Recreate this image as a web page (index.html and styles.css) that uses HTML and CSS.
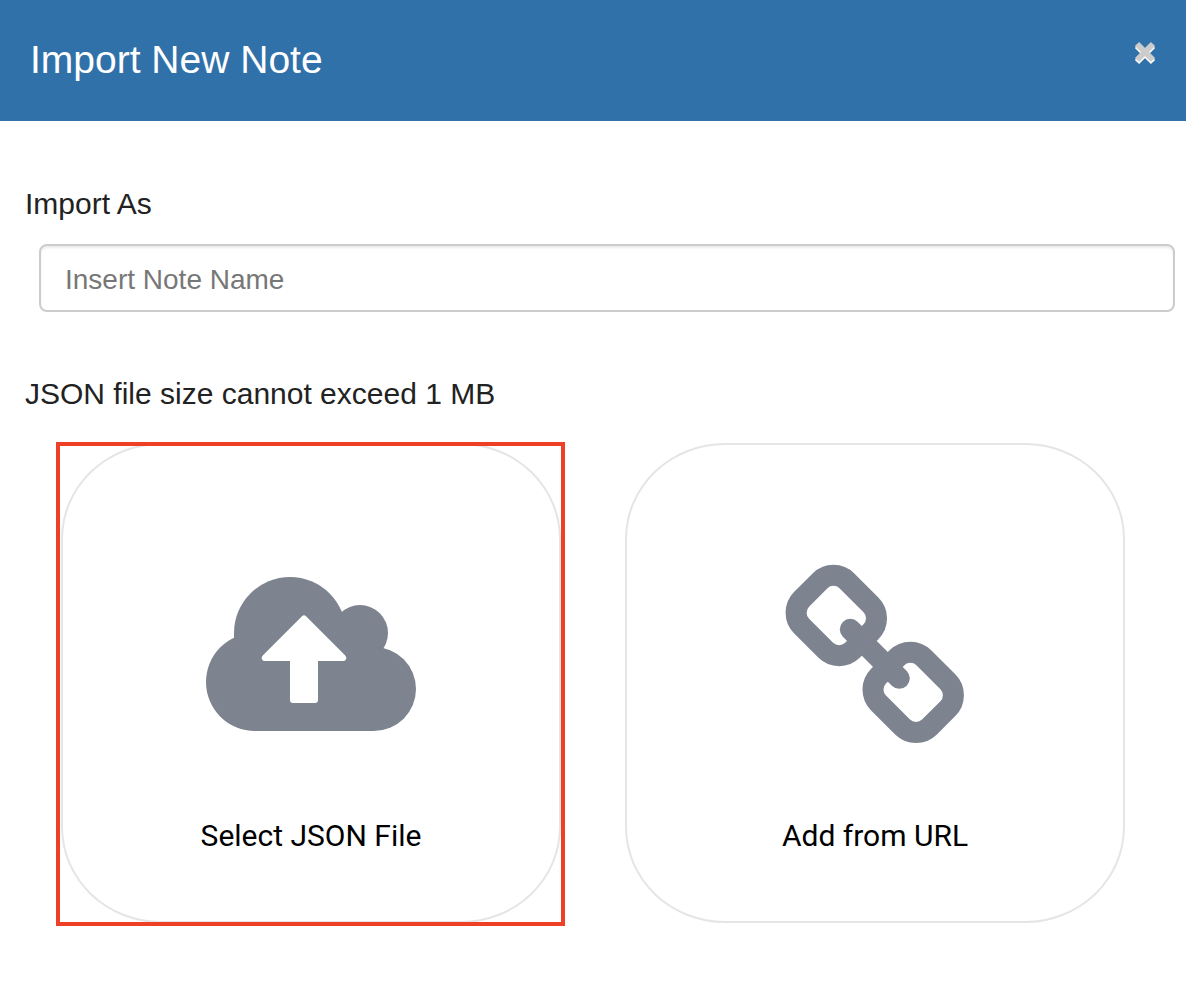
FILE: index.html
```html
<!DOCTYPE html>
<html lang="en">
<head>
<meta charset="utf-8">
<title>Import New Note</title>
<link rel="stylesheet" href="styles.css">
</head>
<body>
<header class="header">
  <h1 class="title">Import New Note</h1>
  <button class="close" type="button" aria-label="Close">
    <svg class="close-icon" viewBox="0 0 22 24" aria-hidden="true">
      <path class="close-shadow" d="M3 5L19 21M19 5L3 21"/>
      <path class="close-cross" d="M3 3L19 19M19 3L3 19"/>
    </svg>
  </button>
</header>
<main class="body">
  <form class="form">
    <label class="label" for="note-name">Import As</label>
    <div class="field"><input class="input" id="note-name" type="text" placeholder="Insert Note Name"></div>
  </form>
  <p class="hint">JSON file size cannot exceed 1 MB</p>
  <div class="options">
    <div class="option option-marked">
      <button class="card" type="button">
        <svg class="icon icon-cloud" viewBox="0 -13 210 180" aria-hidden="true">
          <circle cx="84" cy="56" r="56"/>
          <circle cx="154" cy="56" r="28"/>
          <circle cx="168" cy="112" r="42"/>
          <circle cx="49" cy="105" r="49"/>
          <path d="M28 56H154L168 90V154H49V105L28 65Z"/>
          <path class="icon-arrow" d="M96 39.200L57 78.200C54.500 81 56 84 59 84H84V123Q84 126 87 126H109Q112 126 112 123V84H137C140 84 141.500 81 139 78.200L100 39.200Q98 37.200 96 39.200Z"/>
        </svg>
        <span class="card-label">Select JSON File</span>
      </button>
    </div>
    <div class="option">
      <button class="card" type="button">
        <svg class="icon icon-link" viewBox="15 14 180 180" aria-hidden="true">
          <rect x="-36" y="-32" width="72" height="64" rx="19" transform="translate(66.300 65.500) rotate(45)"/>
          <rect x="-36" y="-32" width="72" height="64" rx="19" transform="translate(143.200 142.400) rotate(45)"/>
          <path d="M80.300 79.300L129.300 128.300"/>
        </svg>
        <span class="card-label">Add from URL</span>
      </button>
    </div>
  </div>
</main>
</body>
</html>
```
FILE: styles.css
```css
* { box-sizing: border-box; }

body {
  margin: 0;
  background: #fff;
  color: #222;
  font-family: "Liberation Sans", Arial, sans-serif;
}

.header {
  display: flex;
  justify-content: space-between;
  align-items: flex-start;
  padding: 36px 30px 37px;
  background: #3071a9;
}

.title {
  margin: 0;
  color: #fff;
  font-size: 39px;
  font-weight: 400;
  line-height: 48px;
}

.close {
  margin: 5px 0 0;
  padding: 0;
  border: 0;
  background: none;
  cursor: pointer;
}

.close-icon {
  display: block;
  width: 22px;
  height: 24px;
  fill: none;
  stroke-width: 6;
}

.close-shadow { stroke: #fff; }
.close-cross { stroke: #ccc; }

.body { padding: 63px 0; }

.label,
.hint {
  display: block;
  margin: 0;
  padding: 0 25px;
  font-size: 30px;
  line-height: 40px;
}

.field { padding: 20px 11px 62px 39px; }

.input {
  display: block;
  width: 100%;
  height: 68px;
  padding: 3px 24px 0;
  border: 2px solid #ccc;
  border-radius: 8px;
  background: #fff;
  box-shadow: inset 0 2px 2px rgba(0, 0, 0, 0.075);
  color: #555;
  font-family: inherit;
  font-size: 28px;
}

.input::placeholder { color: #777; opacity: 1; }

.options {
  display: grid;
  grid-template-columns: 1fr 1fr;
  gap: 64px;
  padding: 29px 61px 0;
}

.option { position: relative; }

.option-marked::after {
  content: "";
  position: absolute;
  inset: -1px -4px -3px -5px;
  border: 4px solid #ee4026;
  pointer-events: none;
}

.card {
  display: flex;
  flex-direction: column;
  align-items: center;
  gap: 72px;
  width: 100%;
  padding: 119px 20px 65px;
  border: 2px solid #e5e5e5;
  border-radius: 20%;
  background: #fff;
  color: #000;
  font-family: Roboto, sans-serif;
  font-size: 30px;
  line-height: 40px;
  cursor: pointer;
}

.icon { height: 180px; }

.icon-cloud {
  width: 210px;
  fill: #7d838f;
}

.icon-arrow { fill: #fff; }

.icon-link {
  width: 180px;
  fill: none;
  stroke: #7d838f;
  stroke-width: 21;
  stroke-linecap: round;
}
```
